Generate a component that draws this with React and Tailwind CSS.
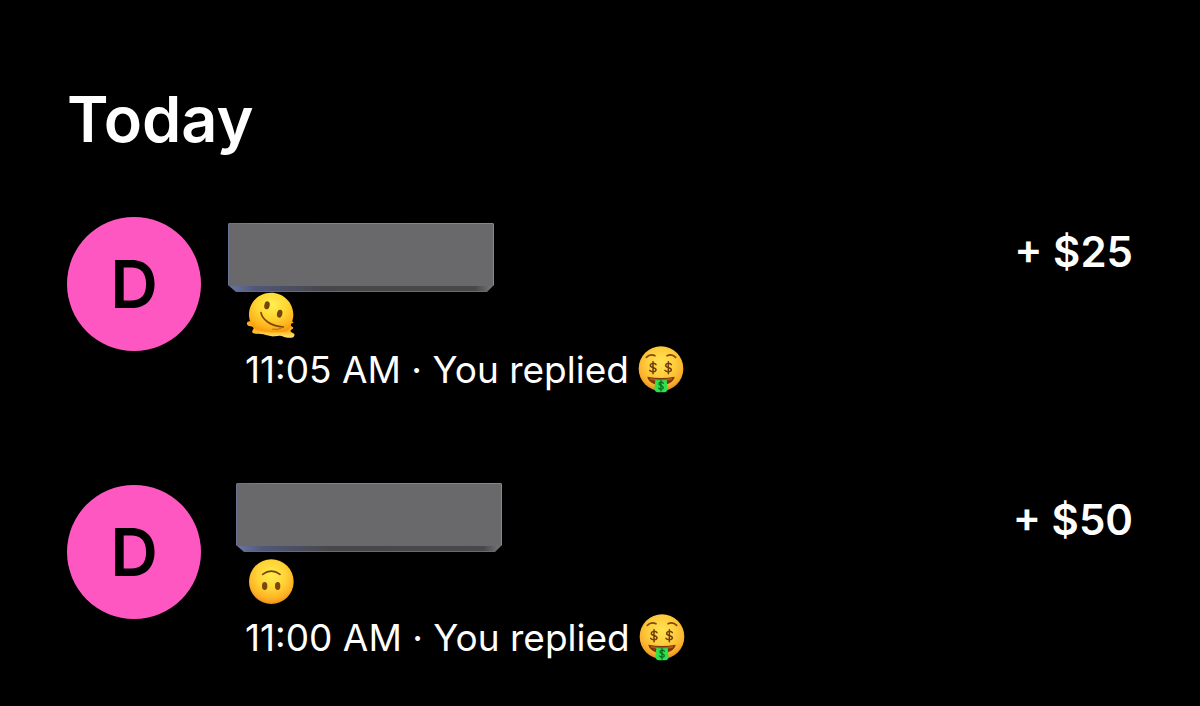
function Money({ id }) {
  const face = `money-face-${id}`;
  return (
    <svg role="img" aria-label="Money-mouth face" className="size-12 shrink-0" viewBox="49 33 144 144">
      <defs>
        <radialGradient id={face} cx="50%" cy="36%" r="66%">
          <stop offset="0" stopColor="#ffe352" />
          <stop offset="0.5" stopColor="#ffcb3c" />
          <stop offset="0.82" stopColor="#f9ad2a" />
          <stop offset="1" stopColor="#dd8420" />
        </radialGradient>
      </defs>
      <circle cx="121" cy="101" r="67" fill={`url(#${face})`} />
      <path d="M77 67Q88 55 103 62M139 62Q154 55 165 67" fill="none" stroke="#7d480d" strokeWidth="5" strokeLinecap="round" />
      <g fill="none" stroke="#6e3d08" strokeWidth="4.5" strokeLinecap="round">
        <path d="M106 89C103 84 90 83 89 91C88 99 107 96 106 105C105 112 91 112 87 106M97 80V116" />
        <path d="M152 89C149 84 136 83 135 91C134 99 153 96 152 105C151 112 137 112 133 106M143 80V116" />
      </g>
      <path d="M80 125Q121 133 162 125C160 139 143 150 121 150S82 139 80 125Z" fill="#7b3509" />
      <path d="M86 129Q121 136 156 129L153 134Q121 141 89 134Z" fill="#b65a1c" />
      <path d="M104 134Q121 138 138 134L141 162Q140 171 131 172H112Q102 171 101 162Z" fill="#2ee04b" />
      <path d="M128 145C126 140 115 140 115 147C115 153 128 151 128 158C128 164 116 164 114 159M121 137V168" fill="none" stroke="#0a6b24" strokeWidth="4" strokeLinecap="round" />
    </svg>
  );
}

function Melting() {
  return (
    <svg role="img" aria-label="Melting face" className="size-[52px]" viewBox="45 30 156 156">
      <defs>
        <radialGradient id="melt-face" cx="52%" cy="30%" r="70%">
          <stop offset="0" stopColor="#fff04f" />
          <stop offset="0.5" stopColor="#ffd531" />
          <stop offset="0.85" stopColor="#fdb21c" />
          <stop offset="1" stopColor="#f79c12" />
        </radialGradient>
        <linearGradient id="melt-pool" x1="0" y1="0" x2="0" y2="1">
          <stop offset="0" stopColor="#f9a91a" />
          <stop offset="0.6" stopColor="#ffb91f" />
          <stop offset="1" stopColor="#ffe47a" />
        </linearGradient>
      </defs>
      <path d="M58 124C50 124 48 133 55 137C61 140 71 138 71 145C71 149 65 150 67 157C71 164 88 160 100 163C112 166 120 170 134 169C144 168 151 166 161 170C172 175 191 175 193 167C196 158 184 160 182 154C179 148 192 148 189 142C187 138 180 139 180 134C181 129 191 131 190 126C188 123 181 124 178 125Z" fill="url(#melt-pool)" />
      <path d="M57 104C57 67 86 38 123 38S190 67 190 104C190 114 187 124 183 132C184 146 175 156 155 156C119 158 84 155 73 144C61 132 57 117 57 104Z" fill="url(#melt-face)" />
      <ellipse cx="111" cy="76" rx="8" ry="12" transform="rotate(13 111 76)" fill="#73440d" />
      <ellipse cx="149" cy="101" rx="8" ry="12" transform="rotate(13 149 101)" fill="#73440d" />
      <path d="M93 98C97 119 120 137 160 141" fill="none" stroke="#804406" strokeWidth="5" strokeLinecap="round" />
      <path d="M128 148Q144 151 160 142" fill="none" stroke="#b16a0c" strokeWidth="3" strokeLinecap="round" />
    </svg>
  );
}

function UpsideDown() {
  return (
    <svg role="img" aria-label="Upside-down face" className="size-[52px]" viewBox="30 24 156 156">
      <defs>
        <radialGradient id="upside-face" cx="50%" cy="35%" r="66%">
          <stop offset="0" stopColor="#ffed4e" />
          <stop offset="0.5" stopColor="#ffd236" />
          <stop offset="0.82" stopColor="#fdb022" />
          <stop offset="1" stopColor="#ec8c1d" />
        </radialGradient>
      </defs>
      <circle cx="109" cy="95" r="67" fill="url(#upside-face)" />
      <path d="M83 73Q109 54 135 73" fill="none" stroke="#754409" strokeWidth="5" strokeLinecap="round" />
      <ellipse cx="89" cy="108" rx="8" ry="12" fill="#7a480e" />
      <ellipse cx="128" cy="108" rx="8" ry="12" fill="#7a480e" />
    </svg>
  );
}

function Slab({ id, className }) {
  const edge = `slab-edge-${id}`;
  const side = `slab-side-${id}`;
  return (
    <svg aria-hidden="true" className={`absolute h-[70px] w-[266px] ${className}`} viewBox="0 0 266 70">
      <defs>
        <linearGradient id={edge}>
          <stop offset="0" stopColor="#6a7294" />
          <stop offset="0.15" stopColor="#828287" />
          <stop offset="1" stopColor="#88888a" />
        </linearGradient>
        <linearGradient id={side}>
          <stop offset="0" stopColor="#6d779f" />
          <stop offset="0.1" stopColor="#50577a" />
          <stop offset="0.35" stopColor="#47474b" />
          <stop offset="0.93" stopColor="#48484a" />
          <stop offset="0.98" stopColor="#6c6c6e" />
          <stop offset="1" stopColor="#7b7b7d" />
        </linearGradient>
      </defs>
      <path d="M2 0H264Q266 0 266 2V62L259 69H8L0 62V2Q0 0 2 0Z" fill={`url(#${side})`} />
      <path d="M2 0H264Q266 0 266 2V62L264 63H2L0 62V2Q0 0 2 0Z" fill={`url(#${edge})`} />
      <path d="M1 1H265V63H1Z" fill="#69696b" />
      <path d="M8 68.500H259" stroke="#6a6a6d" strokeWidth="1" />
    </svg>
  );
}

const payments = [
  { id: 1, note: <Melting />, time: "11:05 AM", amount: "+ $25", slab: "-left-[17px] top-[6px]" },
  { id: 2, note: <UpsideDown />, time: "11:00 AM", amount: "+ $50", slab: "-left-[9px] -top-[2px]" },
];

export default function App() {
  return (
    <main className="min-h-screen bg-black px-[67px] pt-[79px] pb-10 font-['Inter',sans-serif] text-white">
      <h1 className="mb-[58px] text-[63px] leading-[80px] font-semibold">Today</h1>
      <ul className="flex flex-col gap-[88px]">
        {payments.map((p) => (
          <li key={p.id} className="flex items-start">
            <div className="mr-11 flex size-[134px] shrink-0 items-center justify-center rounded-full bg-[#ff57c1] text-[66px] font-semibold text-black">
              D
            </div>
            <div className="relative flex-1">
              <div className="h-[72px]" />
              <Slab id={p.id} className={p.slab} />
              <div className="h-[54px] pt-px">{p.note}</div>
              <p className="flex items-center gap-2 text-[37px] leading-[54px] whitespace-nowrap">
                {p.time} · You replied <Money id={p.id} />
              </p>
            </div>
            <p className="text-[42px] leading-[70px] font-semibold whitespace-nowrap">{p.amount}</p>
          </li>
        ))}
      </ul>
    </main>
  );
}
